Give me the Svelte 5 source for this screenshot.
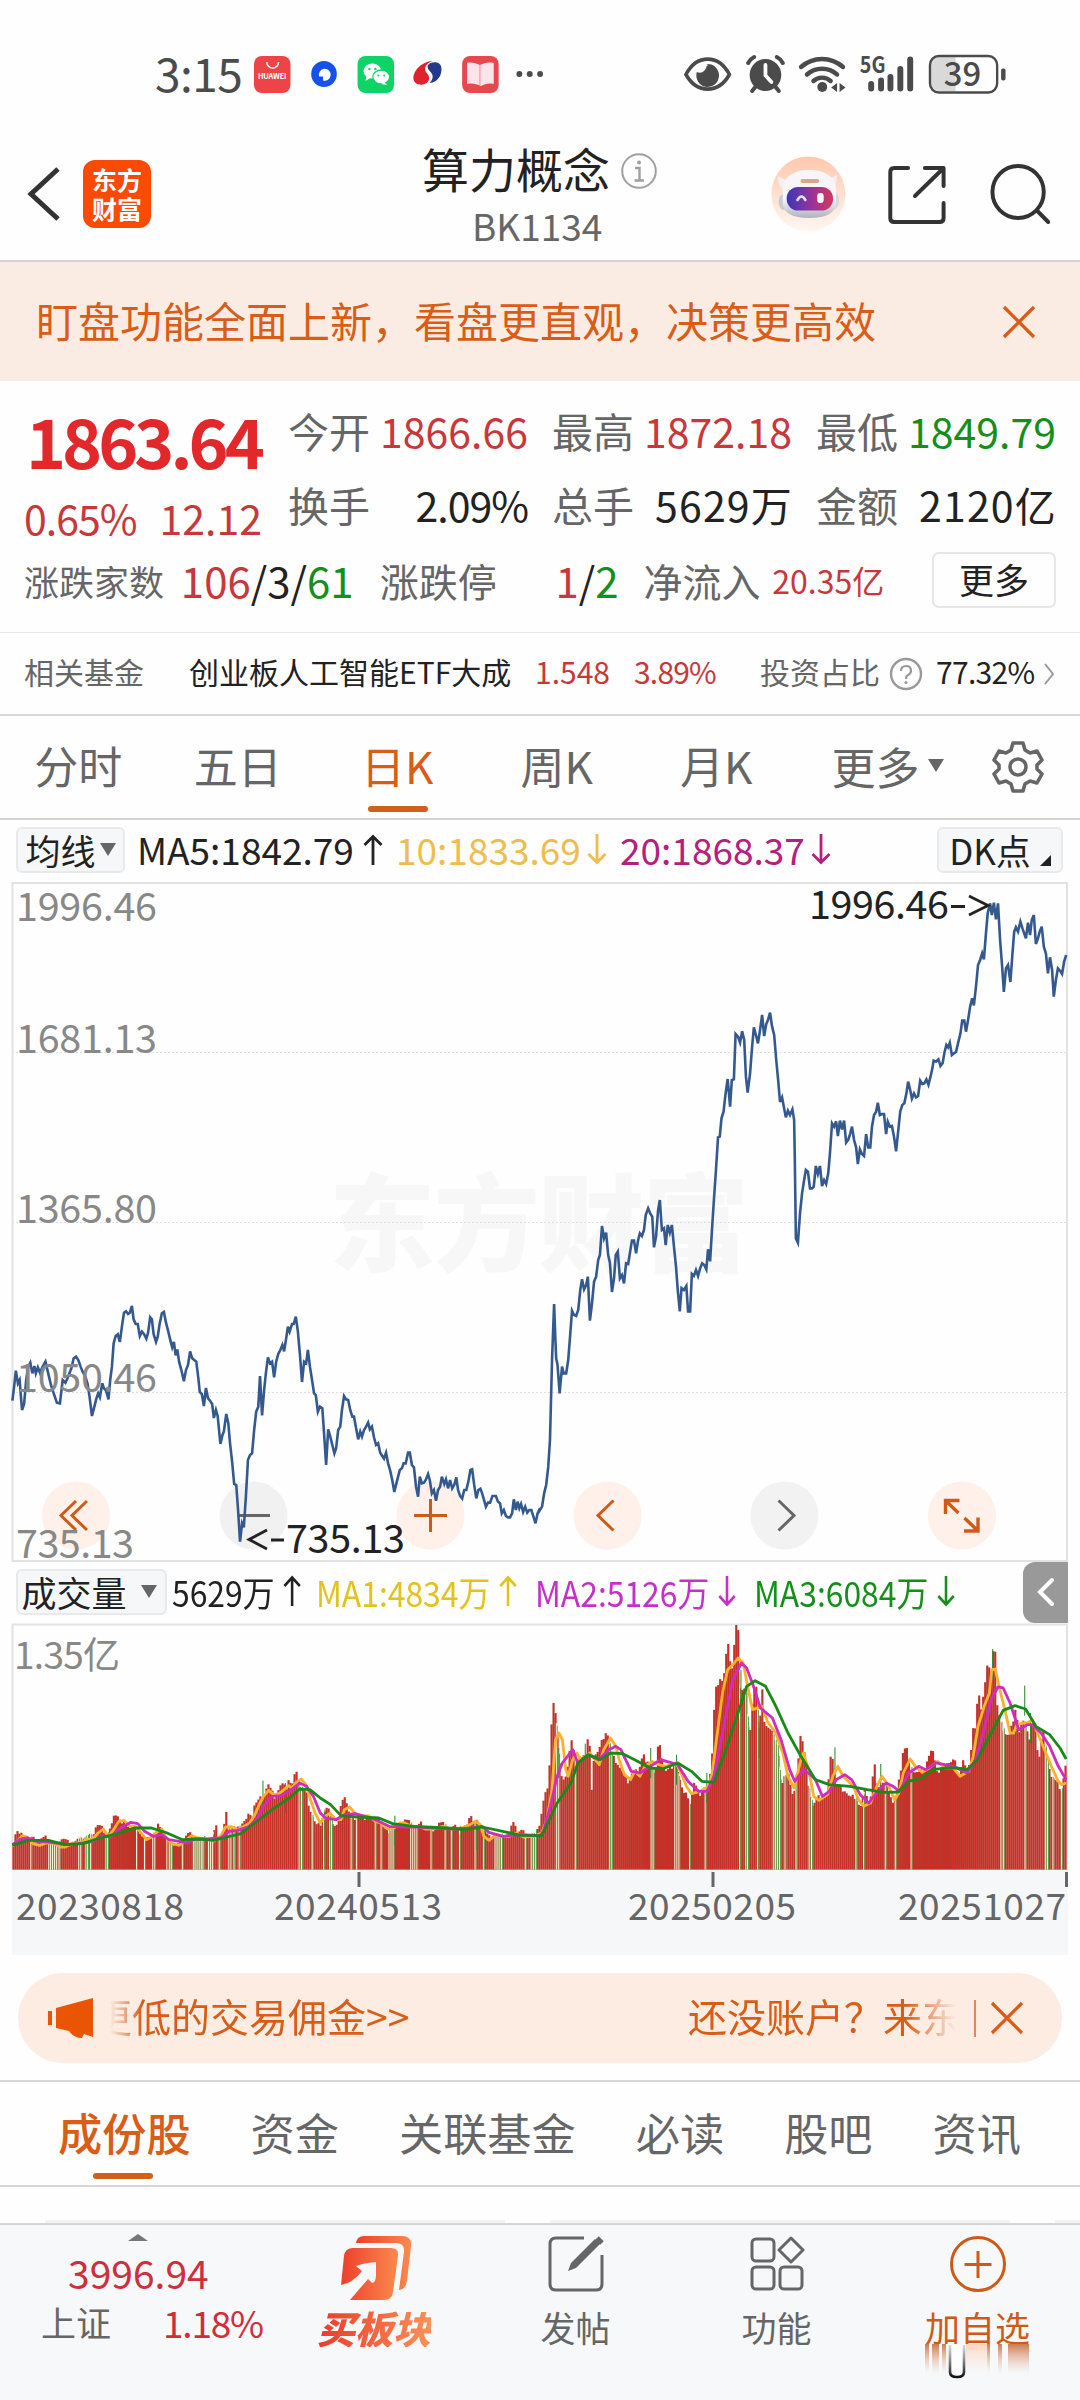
<script>
  const quotes = [
    { label: '今开', value: '1866.66', tone: 'red' },
    { label: '最高', value: '1872.18', tone: 'red' },
    { label: '最低', value: '1849.79', tone: 'green' },
    { label: '换手', value: '2.09%', tone: 'tight' },
    { label: '总手', value: '5629万', tone: 'wide' },
    { label: '金额', value: '2120亿', tone: 'wide' },
  ]
  const periods = ['分时', '五日', '日K', '周K', '月K']
  const sections = ['成份股', '资金', '关联基金', '必读', '股吧', '资讯']
  let period = $state('日K')
  let section = $state('成份股')

  const axis = [
    { text: '1996.46', y: 921 },
    { text: '1681.13', y: 1053 },
    { text: '1365.80', y: 1223 },
    { text: '1050.46', y: 1392 },
    { text: '735.13', y: 1558 },
  ]
  const dates = [
    { text: '20230818', x: 16 },
    { text: '20240513', x: 274 },
    { text: '20250205', x: 628 },
    { text: '20251027', x: 898 },
  ]

  // x runs 0..3098 over the plot, y is in thirds of a pixel from the top edge
  const parse = (s, dx, dy) =>
    s.trim().split(/\s+/).map((p) => {
      const [x, y] = p.split(',').map(Number)
      return [x + dx, y + dy]
    })
  const line = (pts) => pts.map((p) => p.join(',')).join(' ')

  const price = line([
    ...parse(`36,662 41,620 46,572 52,610 57,600 60,640 64,690 70,672 76,600 82,560 88,548 94,580 100,558 104,580 110,562 116,578 124,560 132,545 140,580 148,615 156,640 165,668 174,670 182,600 190,608 200,585 208,562 214,535 221,530 228,542 234,560 240,575 248,590 254,610 260,650 267,708 274,680 280,655 285,640 290,652 297,610 302,625 308,632 315,658 320,600 325,560 330,490 336,468 342,463 348,486 354,440 360,398 366,394 372,402 377,398 383,378 388,418 394,432 400,432 406,468 412,455 418,462 425,476 430,458 436,412 441,418 446,462 453,486 458,470 463,435 470,400 476,396 482,428 488,452 494,478 500,502 505,486 510,526 515,508 520,545 527,572 534,604 540,570 546,555 552,514 558,535 564,540 570,545 576,595 580,636 586,642 592,678 598,624 604,655 610,662 616,672 621,714 627,690 632,708 640,792 646,765 650,755 657,702 663,730 668,790 674,845 680,912 686,915 691,985 697,1085 703,1030 708,1042 714,950 720,840 726,825 732,820 738,750 744,695 750,680 755,588 761,706 767,630 772,580 778,532 784,550 790,545 796,592 802,545 808,522 814,510 820,495 825,514 831,475 836,440 841,455 848,432 853,432 859,410 865,455 871,525 877,606 883,545 889,550 894,510 900,560 906,600 912,640 917,645 923,695 929,680 936,685 941,760 947,855 953,748 959,770 965,795 971,820 976,805 982,750 988,740 993,690 999,648 1005,658 1011,660 1017,690 1023,710 1028,710 1034,745 1040,778 1046,755 1051,770 1057,750 1063,740 1069,728 1074,748 1080,740 1086,772 1092,795 1098,790 1104,818 1110,828 1115,836 1121,818 1127,850 1133,872 1139,900 1145,936 1151,910 1156,890 1161,870 1167,865 1172,850 1178,850 1185,818 1190,818 1196,855 1202,862 1208,920 1214,950 1219,890 1225,910 1231,908 1237,898 1243,882 1248,900 1254,940 1260,930 1266,962 1272,930 1278,920 1283,890 1290,912 1295,898 1301,925 1307,900 1313,925 1319,915 1325,892 1330,930 1336,948 1342,956 1348,930 1354,930 1360,905 1366,870 1371,868 1377,915 1383,955 1389,930 1395,926 1400,940 1406,962 1411,980 1417,968 1423,968 1430,948 1440,948 1446,965 1452,970 1457,1000 1463,990 1469,1008 1475,1012 1481,1012 1487,1000 1492,958 1498,990 1503,965 1508,985 1513,972 1519,996 1525,980 1531,998 1537,990 1543,990 1549,1010 1555,1030 1561,1000 1568,985`, 0, 891),
    ...parse(`0,930 6,920 12,880 18,855 24,800 29,720 32,600 35,480 41,312 44,400 47,475 51,495 57,580 64,500 69,520 76,520 82,480 88,400 93,332 99,345 105,348 111,330 117,270 122,238 128,268 134,255 139,230 145,362 151,310 157,245 163,230 169,180 174,165 180,78 186,115 192,98 198,165 203,188 209,276 215,235 220,165 226,155 232,235 238,225 244,250 250,190 256,192 261,160 267,122 273,122 279,160 285,120 290,100 296,108 302,90 307,45 314,25 320,40 326,50 331,142 337,110 343,30 348,0 354,90 360,85 365,135 371,75 377,98 383,75 389,140 395,200 400,270 406,334 411,264 418,270 425,258 430,334 436,334 441,222 447,228 453,210 459,228 465,205 471,190 477,195 483,208 488,148 494,184 500,80`, 1568, 951),
    ...parse(`505,1020 511,930 517,832 522,830 527,775 533,755 539,700 545,657 552,740 557,660 563,658 568,522 575,530 581,548 587,514 593,540 598,650 603,698 610,640 616,560 621,502 627,525 633,550 639,510 645,465 651,528 657,492 662,480 668,458 674,500 680,525 686,600 692,665 697,726 703,712 708,740 714,772 720,752 726,765 733,748 738,780 740,900 743,1135 749,1148 755,1060 761,1000 767,960 772,930 778,935 784,985 790,985 795,980 801,918 807,942 813,918 819,978 825,960 831,972 837,940 842,880 848,790 854,800 860,784 865,828 871,782 877,808 883,782 889,848 895,840 901,820 906,800 912,840 918,862 923,912 929,868 935,882 941,888 947,822 953,862 959,862 964,800 970,765 976,755 981,728 987,765 993,762 999,762 1005,822 1010,785 1016,800 1022,798 1028,830 1034,874 1040,815 1046,755 1052,735 1058,730 1064,700 1069,665 1075,690 1080,716 1086,700 1092,712 1098,708 1104,662 1110,672 1116,670 1122,658 1128,674 1134,650 1140,622 1143,602 1150,605 1157,598 1163,618 1169,610 1175,575 1180,555 1185,562 1190,548 1196,585 1202,580 1208,576 1215,545 1221,520 1226,482 1232,482 1237,515 1243,480 1249,440 1255,415 1260,436 1266,380 1272,315 1278,300 1284,280 1289,298 1295,220 1300,160 1307,130 1312,165 1318,128 1324,178 1330,130 1336,240 1342,320 1347,396 1353,325 1359,315 1366,366 1372,280 1377,215 1382,202 1388,215 1395,185 1401,205 1411,235 1417,188 1423,225 1428,180 1434,165 1440,252 1446,235 1451,215 1457,200 1463,260 1469,280 1475,340 1481,292 1487,330 1492,410 1498,360 1504,325 1510,332 1516,342 1522,305 1528,285`, 1568, -69),
  ])

  const tops = [
    ...parse(`36,765 43,760 46,710 54,735 62,735 75,740 90,745 105,752 120,748 135,745 150,762 165,770 180,745 190,752 205,765 220,755 240,745 255,740 270,735 280,705 292,712 300,720 310,738 325,705 335,670 345,680 352,705 365,700 380,715 400,715 415,745 430,750 440,735 452,730 462,697 470,720 480,740 495,760 510,765 525,760 540,735 550,727 560,745 580,750 600,745 612,755 627,712 635,745 645,740 657,672 665,715 675,710 690,720 705,695 715,690 722,675 730,690 738,645 748,635 757,625 768,610 778,582 788,605 800,625 812,590 822,585 830,600 838,567 848,590 855,560 861,538 868,585 880,600 890,615 898,650 910,690 920,710 930,705 940,670 952,652 960,690 975,712 985,690 993,625 1003,617 1010,660 1020,690 1040,680 1055,685 1070,675 1085,690 1100,680 1115,720 1130,725 1145,710 1160,705 1175,690 1190,700 1205,715 1225,702 1240,710 1260,718 1275,700 1290,705 1310,715 1330,712 1350,715 1366,670 1375,700 1390,700 1405,720 1420,745 1440,740 1460,735 1480,735 1493,680 1500,730 1515,725 1535,745 1550,735 1562,710`, 0, -103),
    ...parse(`0,705 8,645 17,610 25,575 34,390 41,325 47,400 53,475 60,550 68,570 78,560 85,480 93,440 100,500 108,525 118,500 125,490 133,500 140,435 147,500 150,610 155,510 162,490 170,485 178,460 185,440 193,420 200,450 210,500 225,520 240,550 255,575 270,545 285,545 300,488 308,525 320,520 335,560 344,457 352,490 362,545 375,540 390,520 400,545 412,600 425,605 437,655 445,590 455,580 465,620 475,600 485,600 493,560 500,490 508,310 515,285 524,262 532,280 540,200 547,168 553,215 560,240 567,106 574,106 578,145 580,300 588,295 598,295 605,420 612,430 618,300 628,290 636,440 645,300 652,400 660,410 675,430 690,470 700,595 712,560 720,540 728,590 736,630 745,560 757,428 765,470 772,520 782,600 792,650 805,625 820,620 835,610 843,510 851,500 858,580 870,595 885,600 900,625 915,620 930,655 945,600 958,645 965,570 972,530 980,590 995,580 1010,590 1025,640 1038,600 1045,560 1055,475 1066,478 1073,530 1085,545 1100,550 1115,540 1125,510 1135,488 1145,495 1155,555 1170,530 1180,515 1192,520 1203,510 1215,560 1228,512 1240,550 1250,500 1257,415 1265,420 1273,287 1280,360 1290,300 1302,203 1308,300 1315,180 1322,185 1328,360 1338,400 1350,430 1362,440 1372,400 1382,345 1390,435 1400,400 1412,400 1420,455 1428,395 1438,410 1448,515 1460,415 1470,490 1485,560 1500,580 1515,600 1525,530 1534,530`, 1568, -103),
  ]

  function topAt(x) {
    let i = 1
    while (i < tops.length - 1 && tops[i][0] < x) i++
    const [x0, y0] = tops[i - 1]
    const [x1, y1] = tops[i]
    const t = Math.min(1, Math.max(0, (x - x0) / (x1 - x0)))
    return y0 + (y1 - y0) * t
  }

  const STEP = 5.83
  const bars = Array.from({ length: 525 }, (_, i) => {
    const x = 36 + i * STEP
    const noise = ((i * 7919 + 31) % 17) - 8
    const down = (i * i * 13 + i * 7) % 11 > 5
    const top = Math.max(3, topAt(x + STEP / 2) + (topAt(x) > 40 ? noise : 0))
    return { x, top, down }
  })

  // days with a thin green candle, seen as light gaps in the volume area
  const gaps = [
    ...[90, 142, 147, 153, 159, 165, 172, 229, 235, 250, 255, 263, 308, 313, 397, 420, 444, 450, 485, 492, 498, 530, 562, 567, 573, 579, 585, 590, 606, 612, 618, 637, 665, 671, 680, 695, 869, 876, 907, 940, 958, 963, 1020, 1036, 1090, 1107, 1130, 1136, 1142, 1193, 1199, 1205, 1211, 1252, 1293, 1311, 1335, 1380, 1405, 1438, 1444, 1450, 1457, 1526, 1543, 1550, 1556],
    ...[48, 55, 103, 203, 209, 323, 329, 392, 398, 404, 435, 480, 580, 598, 603, 632, 678, 684, 690, 696, 712, 744, 782, 789, 918, 940, 1003, 1032, 1078, 1339, 1346, 1409, 1468, 1474, 1490, 1515].map((x) => x + 1568),
  ]
  const spikes = [[762, 573], [827, 580], [942, 660], [1145, 678], [1383, 690], [1621, 475], [1698, 462], [1888, 475], [1963, 495], [2051, 550], [2150, 240], [2203, 415], [2423, 473], [2556, 523], [2881, 178], [2974, 288], [2991, 370]]

  const averages = [
    {
      color: '#f9b22c',
      points: line([
        ...parse(`36,770 50,755 65,738 80,742 95,762 115,767 135,760 155,760 175,772 190,772 210,760 230,760 250,750 270,748 285,730 300,718 315,740 330,720 345,695 360,692 375,708 395,712 410,730 425,750 440,742 455,728 470,718 480,740 495,760 520,767 540,752 555,738 575,745 600,748 620,755 640,740 655,712 675,712 690,722 705,712 725,700 740,675 755,640 765,620 780,602 795,615 810,612 825,600 838,588 848,595 860,578 875,568 888,585 900,625 915,670 930,700 945,680 958,670 975,690 990,690 1000,660 1015,652 1030,670 1050,680 1070,678 1090,695 1105,700 1125,718 1145,715 1160,700 1175,700 1195,710 1215,710 1235,718 1260,718 1285,710 1310,718 1340,715 1365,705 1380,695 1395,705 1405,740 1420,752 1440,735 1460,740 1480,740 1500,730 1520,742 1550,740`, 0, -103),
        ...parse(`5,730 20,690 35,600 45,450 55,430 65,450 75,540 82,560 95,510 107,490 118,510 130,500 145,490 160,510 172,525 185,480 205,445 220,470 230,510 245,555 263,570 275,545 290,560 305,530 325,515 345,525 365,530 395,520 410,550 425,590 440,612 465,605 490,590 500,550 515,430 530,310 545,240 560,225 575,205 590,220 605,300 617,360 645,350 660,395 685,430 705,490 720,560 738,595 755,520 765,490 780,540 795,620 810,632 835,615 850,560 865,530 880,560 895,575 910,590 925,630 940,650 960,640 978,590 993,560 1010,585 1030,630 1042,610 1055,550 1075,508 1090,530 1110,548 1130,535 1155,515 1175,535 1200,535 1220,560 1245,545 1258,500 1272,410 1290,350 1305,310 1312,240 1322,238 1335,300 1350,360 1365,430 1375,430 1385,405 1400,400 1415,400 1430,390 1445,430 1465,480 1485,530 1505,575 1515,585 1528,580`, 1568, -103),
      ]),
    },
    {
      color: '#d02cc0',
      points: line([
        ...parse(`36,765 60,748 80,745 110,755 150,758 190,765 230,762 270,755 300,738 320,742 350,715 380,698 400,702 420,725 445,740 470,735 490,750 520,755 545,760 565,748 600,748 640,745 665,725 690,722 720,712 745,690 765,650 790,620 815,618 840,605 870,580 890,590 910,620 930,670 945,685 975,690 1000,675 1030,672 1060,680 1090,690 1130,710 1170,712 1210,712 1260,715 1320,718 1370,715 1400,710 1420,728 1460,740 1510,735`, 0, -103),
        ...parse(`0,738 10,725 30,650 50,560 65,520 95,480 110,520 140,495 170,510 200,480 220,470 235,480 265,545 290,550 320,530 350,510 400,525 430,575 460,605 485,605 505,560 530,430 560,270 585,220 600,235 620,290 640,355 675,385 700,450 725,540 740,575 765,540 785,555 800,570 820,620 840,605 860,570 885,555 905,570 930,615 955,640 980,605 1005,580 1025,590 1045,605 1070,550 1100,530 1120,540 1150,520 1200,530 1240,550 1265,510 1290,420 1310,330 1330,292 1345,295 1365,340 1390,420 1415,405 1430,405 1455,430 1480,470 1505,530 1528,570`, 1568, -103),
      ]),
    },
    {
      color: '#178a17',
      points: line([
        ...parse(`36,767 80,752 140,752 190,765 240,762 290,745 340,732 390,715 440,715 480,728 530,750 580,748 620,752 660,742 700,732 740,700 790,660 840,625 870,598 900,600 930,625 960,645 990,678 1040,682 1100,685 1140,702 1200,710 1300,715 1350,720 1400,712 1460,725 1510,737`, 0, -103),
        ...parse(`5,738 50,640 90,580 110,520 140,495 175,510 205,490 240,492 275,510 320,535 355,538 400,520 440,545 470,575 505,578 540,480 575,370 600,290 625,273 655,290 685,350 720,430 755,495 800,570 840,585 900,590 950,600 1000,608 1040,607 1070,575 1110,565 1140,540 1180,535 1210,535 1240,540 1270,510 1310,430 1345,362 1380,348 1410,358 1440,410 1480,435 1510,475 1528,508`, 1568, -103),
      ]),
    },
  ]
</script>

{#snippet arrow(up)}
  <svg class="arrow" width="20" height="32" viewBox="0 0 20 32">
    {#if up}
      <path d="M10 31V3M1.500 11L10 2.500L18.500 11" />
    {:else}
      <path d="M10 1V29M1.500 21L10 29.500L18.500 21" />
    {/if}
  </svg>
{/snippet}

<div class="screen">
  <div class="status">
    <span class="status__time">3:15</span>
    <svg class="status__apps" width="296" height="40" viewBox="252 54 300 40" preserveAspectRatio="none">
      <rect x="255" y="56" width="37" height="37" rx="8" fill="#ee4347" />
      <path d="M268 62a6 6 0 0 0 12 0" fill="none" stroke="#fff" stroke-width="1.500" />
      <text x="259" y="79.500" textLength="29" font-size="7.500" font-weight="700" fill="#fff">HUAWEI</text>
      <circle cx="326" cy="74" r="13" fill="#1551ea" />
      <path d="M325 80.500v-4h-4a6 6 0 1 1 4 4z" fill="#fff" />
      <rect x="360" y="56" width="37" height="37" rx="8" fill="#0fd366" />
      <ellipse cx="375" cy="71" rx="9" ry="7.500" fill="#fff" />
      <path d="M369 76l-1 5 5-3z" fill="#fff" />
      <ellipse cx="384" cy="77" rx="8.500" ry="7" fill="#fff" stroke="#0fd366" stroke-width="1.300" />
      <path d="M387 82l3 3-6-1z" fill="#fff" />
      <g fill="#0fd366"><circle cx="372" cy="69" r="1.200" /><circle cx="378" cy="69" r="1.200" /><circle cx="381" cy="75.500" r="1" /><circle cx="387" cy="75.500" r="1" /></g>
      <path d="M436 61c-13 1-21 12-19 19 1 5 9 6 13 3 4-3 3-7 0-10-3-4-2-9 6-12z" fill="#e0222d" />
      <path d="M434 63c10-3 13 4 10 12-2 5-7 8-11 8 4-4 4-8 1-11-4-4-4-7 0-9z" fill="#24398c" />
      <rect x="466" y="56" width="37" height="37" rx="8" fill="#e5484d" />
      <path d="M471 63c4-1 9 0 13 2 4-2 9-3 14-2v21c-5-1-9 0-13 2-4-2-9-3-14-2z" fill="#fde3ea" />
      <path d="M484 65v20" stroke="#f3a9b5" stroke-width="1.500" />
      <g fill="#4b4b4b"><circle cx="524" cy="74" r="3" /><circle cx="534.500" cy="74" r="3" /><circle cx="545" cy="74" r="3" /></g>
    </svg>
    <svg class="status__system" width="328" height="42" viewBox="681 52 332 42" preserveAspectRatio="none">
      <path d="M686 73.500C697 53 719 53 730 73.500C719 93 697 93 686 73.500z" fill="#fff" stroke="#4b4b4b" stroke-width="3.600" />
      <path d="M707 65c-1 5-5 8-10 6a11.500 11.500 0 1 0 10-8c2 1 1 2 0 2z" fill="#4b4b4b" />
      <circle cx="766.500" cy="74" r="16" fill="#4b4b4b" />
      <path d="M766.500 64v10.500l6 6.500" fill="none" stroke="#fff" stroke-width="3.800" stroke-linecap="round" stroke-linejoin="round" />
      <path d="M749 62q2-4 6-6M784 62q-2-4-6-6M757 85l-4 5M776 85l4 5" fill="none" stroke="#4b4b4b" stroke-width="4" stroke-linecap="round" />
      <g fill="none" stroke="#4b4b4b" stroke-width="4.400" stroke-linecap="round">
        <path d="M802.500 66a32 32 0 0 1 42.500 0" />
        <path d="M808.500 73.500a23 23 0 0 1 30.500 0" />
        <path d="M815 80a13 13 0 0 1 17.500 0" />
      </g>
      <circle cx="824" cy="86" r="5" fill="#4b4b4b" />
      <path d="M839 82v9l-6-4.500zM841.500 82v9l6-4.500z" fill="#4b4b4b" />
      <text x="862" y="72.500" textLength="26" lengthAdjust="spacingAndGlyphs" font-size="23" font-weight="700" fill="#4b4b4b">5G</text>
      <g stroke="#4b4b4b" stroke-width="6" stroke-linecap="round">
        <path d="M873.500 83v4.500M883.500 79.500v8M893 76v11.500M903 68v19.500M913 58.500v29" />
      </g>
      <path d="M942 56h17v34h-17q-8-1-8-9V64q0-7 8-8z" fill="#d9d9d9" />
      <rect x="933" y="55" width="68" height="36.500" rx="9" fill="none" stroke="#4b4b4b" stroke-width="2.400" />
      <text x="947" y="85" textLength="38" lengthAdjust="spacingAndGlyphs" font-size="33" font-weight="500" fill="#4b4b4b">39</text>
      <rect x="1005" y="67.500" width="4.500" height="12" rx="2" fill="#4b4b4b" />
    </svg>
  </div>

  <header class="header">
    <button class="header__back" aria-label="返回">
      <svg width="36" height="58" viewBox="0 0 36 58"><path d="M33 4L6 29L33 54" fill="none" stroke="#333" stroke-width="5" /></svg>
    </button>
    <div class="header__logo">东方<br />财富</div>
    <div class="header__center">
      <div class="header__title">
        <span>算力概念</span>
        <svg width="38" height="38" viewBox="0 0 38 38">
          <circle cx="19" cy="19" r="16.800" fill="none" stroke="#a0a0a0" stroke-width="2" />
          <circle cx="19" cy="10.500" r="2" fill="#a0a0a0" />
          <path d="M15 16h4.500v12M14.500 28.500h9.500" fill="none" stroke="#a0a0a0" stroke-width="2.400" />
        </svg>
      </div>
      <div class="header__code">BK1134</div>
    </div>
    <svg class="header__icons" width="306" height="80" viewBox="760 154 310 80" preserveAspectRatio="none">
      <defs>
        <linearGradient id="halo" x1="0" y1="0" x2="0" y2="1"><stop offset="0" stop-color="#ffc8ad" /><stop offset="1" stop-color="#fff7f2" /></linearGradient>
        <linearGradient id="visor" x1="0" y1="0" x2="1" y2="0"><stop offset="0" stop-color="#3b36b8" /><stop offset=".55" stop-color="#9b3399" /><stop offset="1" stop-color="#d23a5a" /></linearGradient>
        <linearGradient id="helmet" x1="0" y1="0" x2="0" y2="1"><stop offset=".6" stop-color="#f6f6fa" /><stop offset="1" stop-color="#b0b1c0" /></linearGradient>
      </defs>
      <circle cx="810" cy="194" r="37.500" fill="url(#halo)" />
      <path d="M779 176l8 4 4 8-6 3q-6-7-6-15zM839 175l-8 4-4 8 6 4q6-6 6-16z" fill="#efeff5" />
      <ellipse cx="785" cy="202" rx="5" ry="8" fill="#c8c9d2" /><ellipse cx="836" cy="201" rx="5" ry="8" fill="#d6d7e0" />
      <path d="M784 190c0-13 11-20 27-20s27 7 27 20v13c0 9-9 15-27 15s-27-6-27-15z" fill="url(#helmet)" />
      <rect x="802" y="179" width="19" height="4" rx="2" fill="#d9a78d" />
      <rect x="788" y="187" width="47" height="23.500" rx="11.500" fill="url(#visor)" />
      <path d="M799 200q4-7 8 0" fill="none" stroke="#dfe3ff" stroke-width="2.600" stroke-linecap="round" />
      <rect x="819" y="193" width="6.500" height="10" rx="3" fill="#fff" />
      <g fill="none" stroke="#333" stroke-width="4" stroke-linecap="round" stroke-linejoin="round">
        <path d="M911 168h-14q-4 0-4 4v46q0 4 4 4h46q4 0 4-4v-15" />
        <path d="M928 168h19v18M946 169l-28 27" />
        <circle cx="1022.500" cy="192" r="26" />
        <path d="M1042 211l11 11" />
      </g>
    </svg>
  </header>

  <div class="notice">
    <span>盯盘功能全面上新，看盘更直观，决策更高效</span>
    <svg width="34" height="34" viewBox="0 0 34 34"><path d="M2 2L32 32M32 2L2 32" stroke="#dd5a16" stroke-width="3.200" /></svg>
  </div>

  <section class="quote">
    <div class="quote__top">
      <div class="quote__main">
        <div class="quote__price">1863.64</div>
        <div class="quote__change"><span class="tight">0.65%</span><span>12.12</span></div>
      </div>
      <div class="quote__grid">
        {#each quotes as q}
          <div class="quote__cell"><span class="label">{q.label}</span><span class={q.tone}>{q.value}</span></div>
        {/each}
      </div>
    </div>
    <div class="quote__extra">
      <span class="label quote__count">涨跌家数</span>
      <span class="quote__ratio"><b>106</b>/3/<i>61</i></span>
      <span class="label quote__limit">涨跌停</span>
      <span class="quote__ratio quote__ratio--limit"><b>1</b>/<i>2</i></span>
      <span class="label quote__flow">净流入</span>
      <span class="red quote__amount">20.35亿</span>
      <button class="quote__more">更多</button>
    </div>
  </section>

  <div class="fund">
    <span class="label fund__title">相关基金</span>
    <span class="fund__name">创业板人工智能ETF大成</span>
    <span class="red fund__value">1.548</span>
    <span class="red fund__rate">3.89%</span>
    <span class="label">投资占比</span>
    <svg class="fund__help" width="34" height="34" viewBox="0 0 34 34">
      <circle cx="17" cy="17" r="15" fill="none" stroke="#999" stroke-width="2.400" />
      <path d="M12 14q0-5 5-5t5 4.500q0 3-3 4.500-2 1-2 4" fill="none" stroke="#999" stroke-width="2.200" /><circle cx="17" cy="25.500" r="1.600" fill="#999" />
    </svg>
    <span class="fund__share">77.32%</span>
    <svg width="12" height="24" viewBox="0 0 12 24"><path d="M2 2L10 12L2 22" fill="none" stroke="#999" stroke-width="2" /></svg>
  </div>

  <nav class="periods">
    {#each periods as p}
      <button class="periods__item" class:active={period === p} onclick={() => (period = p)}>{p}</button>
    {/each}
    <button class="periods__more">更多<i class="caret"></i></button>
    <svg class="periods__gear" width="54" height="54" viewBox="0 0 54 54" fill="none" stroke="#666" stroke-width="3.600" stroke-linejoin="round">
      <path d="M22 3h10l2 7 5 3 7-2 5 9-5 5v4l5 5-5 9-7-2-5 3-2 7H22l-2-7-5-3-7 2-5-9 5-5v-4l-5-5 5-9 7 2 5-3z" />
      <circle cx="27" cy="27" r="8" />
    </svg>
  </nav>

  <div class="legend">
    <button class="chip">均线<i class="caret"></i></button>
    <span class="legend__ma5">MA5:1842.79</span>{@render arrow(true)}
    <span class="legend__ma10 legend__value">10:1833.69</span><span class="legend__ma10">{@render arrow(false)}</span>
    <span class="legend__ma20 legend__value">20:1868.37</span><span class="legend__ma20">{@render arrow(false)}</span>
    <button class="chip chip--dk">DK点<i></i></button>
  </div>

  <svg class="chart" width="1080" height="682" viewBox="0 880 1080 682">
    <text x="329" y="1263" textLength="420" font-size="106" font-weight="800" fill="#f7f7f8">东方财富</text>
    <g stroke="#e0e0e0" stroke-dasharray="2 2">
      <path d="M12 1052.500H1067M12 1222.500H1067M12 1392.500H1067" />
    </g>
    <rect x="12.500" y="883" width="1054.500" height="678" fill="none" stroke="#e2e2e4" stroke-width="2" />
    <g>
      <circle cx="76" cy="1515.500" r="34" fill="#fff0e9" /><circle cx="253.500" cy="1515.500" r="34" fill="#f1f1f2" />
      <circle cx="430.500" cy="1515.500" r="34" fill="#fff0e9" /><circle cx="607.500" cy="1515.500" r="34" fill="#fff0e9" />
      <circle cx="784.500" cy="1515.500" r="34" fill="#f2f2f2" /><circle cx="962" cy="1515.500" r="34" fill="#fff0e9" />
    </g>
    <g fill="none" stroke="#cf5a18" stroke-width="3">
      <path d="M76 1501L61 1515.500L76 1530M87 1501L72 1515.500L87 1530" />
      <path d="M414 1515.500h33M430.500 1499v33" />
      <path d="M613.500 1500.500L598 1515.500L613.500 1530.500" />
      <path d="M945.500 1514v-13.500h14M946 1501l12.500 12M978 1517.500v13.500h-14M977 1530l-12.500-12" stroke-width="3.400" />
    </g>
    <g fill="none" stroke="#666" stroke-width="3"><path d="M239 1515.500h31M778.500 1500.500L794 1515.500L778.500 1530.500" /></g>
    <g transform="translate(0 883) scale(.34438 .33333)">
      <polyline points={price} fill="none" stroke="#33598f" stroke-width="2.600" stroke-linejoin="miter" vector-effect="non-scaling-stroke" />
    </g>
    <g font-size="39.500" fill="#888">
      {#each axis as a}
        <text x="16" y={a.y} textLength={a.text.length > 6 ? 141 : 118}>{a.text}</text>
      {/each}
    </g>
    <g font-size="39.500" fill="#222">
      <text x="809" y="919" textLength="140">1996.46</text>
      <text x="286" y="1553" textLength="119">735.13</text>
      <path d="M951 906.500h14M969 896l19 9.500l-19 9.500M284 1540h-13M267 1530l-18 9.500l18 9.500" fill="none" stroke="#222" stroke-width="2.800" />
    </g>
  </svg>

  <div class="legend legend--volume">
    <button class="chip chip--volume">成交量<i class="caret"></i></button>
    <span class="legend__now">5629万{@render arrow(true)}</span>
    <span class="legend__v1">MA1:4834万{@render arrow(true)}</span>
    <span class="legend__v2">MA2:5126万{@render arrow(false)}</span>
    <span class="legend__v3">MA3:6084万{@render arrow(false)}</span>
    <button class="legend__drawer" aria-label="展开">
      <svg width="20" height="30" viewBox="0 0 20 30"><path d="M16 3L4 15L16 27" fill="none" stroke="#fff" stroke-width="4" stroke-linecap="round" /></svg>
    </button>
  </div>

  <svg class="chart" width="1080" height="334" viewBox="0 1622 1080 334">
    <rect x="12" y="1871" width="1056" height="84" fill="#f6f7f9" />
    <path d="M12.500 1870V1624.500H1067V1870" fill="none" stroke="#e2e2e4" stroke-width="2" />
    <text x="14" y="1669" textLength="106" font-size="37" fill="#888">1.35亿</text>
    <g transform="translate(0 1624) scale(.34438 .33333)">
      {#each bars as b}
        <rect x={b.x} y={b.top} width={STEP + 0.4} height={737 - b.top} fill={b.down ? '#b13b28' : '#d02b29'} />
      {/each}
      {#each gaps as x}
        <rect x={x - 2} y={topAt(x) - 12} width="5" height={749 - topAt(x)} fill="#f6f7dc" />
        <rect x={x + 1} y={topAt(x) - 4} width="2" height={741 - topAt(x)} fill="#178a17" />
      {/each}
      {#each spikes as [x, y]}
        <rect {x} y={y - 103} width="3" height="90" fill="#2f8a2f" />
      {/each}
      {#each averages as a}
        <polyline points={a.points} fill="none" stroke={a.color} stroke-width="2.800" stroke-linejoin="round" vector-effect="non-scaling-stroke" />
      {/each}
    </g>
    <path d="M359 1872v15M713 1872v15M1066.500 1872v15" stroke="#666" stroke-width="3" />
    <g font-size="37" fill="#666">
      {#each dates as d}
        <text x={d.x} y="1920" textLength="168">{d.text}</text>
      {/each}
    </g>
  </svg>

  <div class="promo">
    <svg width="48" height="42" viewBox="0 0 48 42" fill="#ea5504"><path d="M1 14h4v14H1zM9 11L46 1v39l-9-3-2 4q-8 0-13-7L9 31z" /></svg>
    <div class="promo__text"><span>更低的交易佣金&gt;&gt;</span><span>还没账户？来东</span></div>
    <i class="promo__sep"></i>
    <svg width="34" height="34" viewBox="0 0 34 34"><path d="M2 2L32 32M32 2L2 32" stroke="#dd5a16" stroke-width="3.200" /></svg>
  </div>

  <nav class="sections">
    {#each sections as s}
      <button class="sections__item" class:active={section === s} onclick={() => (section = s)}>{s}</button>
    {/each}
  </nav>

  <div class="cards"><i></i><i></i><i></i></div>

  <footer class="bottom">
    <div class="bottom__index">
      <i class="bottom__up"></i>
      <div class="bottom__point">3996.94</div>
      <div class="bottom__row"><span>上证</span><b>1.18%</b></div>
    </div>
    <div class="bottom__item bottom__item--buy">
      <svg width="74" height="68" viewBox="0 0 74 68">
        <defs>
          <linearGradient id="buy1" x1="0" y1="0" x2="1" y2="0"><stop offset="0" stop-color="#ed3f2b" /><stop offset="1" stop-color="#fb8a4e" /></linearGradient>
        </defs>
        <path d="M16 9q1-7 8-7h38q10 0 9 10l-4 35q-1 8-8 9l5-38q1-9-8-9z" fill="url(#buy1)" />
        <path d="M4 22q1-8 9-8h38q8 0 7 8l-5 36q-1 8-9 8H10l18-21 4 4q4-1 4-8V28q-13 1-20 4l6 5Q13 49 1 51z" fill="url(#buy1)" />
      </svg>
      <span>买板块</span>
    </div>
    <div class="bottom__item">
      <svg width="58" height="58" viewBox="0 0 58 58" fill="none" stroke="#666" stroke-width="3">
        <path d="M37 3H9Q3 3 3 9v40q0 6 6 6h40q6 0 6-6V20" />
        <path d="M21 36l3-8L48 4l5 5-24 24z" fill="#666" stroke="none" /><path d="M50 3l5 5" stroke-width="5" />
      </svg>
      <span>发帖</span>
    </div>
    <div class="bottom__item">
      <svg width="56" height="56" viewBox="0 0 56 56" fill="none" stroke="#666" stroke-width="3">
        <rect x="3" y="3" width="22" height="22" rx="4" /><rect x="3" y="31" width="22" height="22" rx="4" /><rect x="31" y="31" width="22" height="22" rx="4" />
        <path d="M42 2l12 12-12 12-12-12z" stroke-linejoin="round" />
      </svg>
      <span>功能</span>
    </div>
    <div class="bottom__item bottom__item--add">
      <svg width="58" height="58" viewBox="0 0 58 58" fill="none" stroke="#cf5a18" stroke-width="3"><circle cx="29" cy="29" r="26.500" /><path d="M15.500 29.500h27M29 16v27" /></svg>
      <span>加自选</span>
      <svg class="bottom__trail" width="110" height="36" viewBox="0 0 110 36">
        <defs>
          <linearGradient id="fade" x1="0" y1="0" x2="0" y2="1"><stop offset="0" stop-color="#c25a28" stop-opacity=".8" /><stop offset="1" stop-color="#e9b79c" stop-opacity="0" /></linearGradient>
          <linearGradient id="pale" x1="0" y1="0" x2="0" y2="1"><stop offset="0" stop-color="#ffc5a6" stop-opacity=".7" /><stop offset="1" stop-color="#ffe6da" stop-opacity="0" /></linearGradient>
          <linearGradient id="ink" x1="0" y1="0" x2="0" y2="1"><stop offset="0" stop-color="#555" stop-opacity=".2" /><stop offset="1" stop-color="#111" /></linearGradient>
        </defs>
        <rect width="110" height="36" fill="#f6f8fa" />
        <rect x="2" width="4" height="30" fill="url(#fade)" /><rect x="9" width="7" height="30" fill="url(#fade)" /><rect x="19" width="4" height="30" fill="url(#fade)" />
        <rect x="43" width="21" height="30" fill="url(#pale)" /><rect x="64" width="3" height="30" fill="url(#fade)" />
        <rect x="75" width="4" height="30" fill="url(#fade)" /><rect x="85" width="21" height="30" fill="url(#fade)" />
        <path d="M27 1V28q0 5 7 5t7-5V1" fill="#fdfdfd" stroke="url(#ink)" stroke-width="2.600" />
      </svg>
    </div>
  </footer>
</div>

<style>
  :global(body) {
    margin: 0;
    background: #fefefe;
  }

  .screen {
    width: 1080px;
    height: 2400px;
    overflow: hidden;
    background: #fefefe;
    color: #222;
    font-family: "Noto Sans CJK SC", "Noto Sans", sans-serif;
    font-size: 41px;
    line-height: 1;
    white-space: nowrap;
  }

  .screen svg {
    display: block;
    flex: none;
  }

  button {
    padding: 0;
    border: 0;
    background: none;
    color: inherit;
    font: inherit;
    cursor: pointer;
  }

  .label {
    color: #666;
  }

  .red {
    color: #c8383a;
  }

  .green {
    color: #14901a;
  }

  .tight {
    letter-spacing: -1px;
  }

  .wide {
    margin-right: -1px;
    letter-spacing: 1.2px;
  }

  .caret {
    display: inline-block;
    border: 8px solid transparent;
    border-top: 13px solid #666;
    border-bottom: 0;
  }

  .status {
    display: flex;
    align-items: center;
    height: 148px;
    box-sizing: border-box;
    padding: 0 71px 0 155px;
  }

  .status__time {
    width: 96px;
    padding-bottom: 5px;
    color: #4b4b4b;
    font-size: 46px;
    letter-spacing: -0.5px;
  }

  .status__system {
    margin-left: auto;
  }

  .header {
    display: flex;
    align-items: center;
    height: 112px;
    padding: 0 15px 0 25px;
    border-bottom: 2px solid #d5d5d7;
  }

  .header__back {
    width: 36px;
    margin-top: -20px;
  }

  .header__logo {
    display: flex;
    align-items: center;
    justify-content: center;
    width: 68px;
    height: 68px;
    margin: -20px 0 0 22px;
    border-radius: 12px;
    background: #fb4a05;
    color: #fff;
    font-size: 25px;
    font-weight: 700;
    line-height: 29px;
  }

  .header__center {
    flex: 1;
    margin: -21px 0 0 10px;
    padding-left: 261px;
  }

  .header__title {
    display: flex;
    align-items: center;
    gap: 10px;
    height: 54px;
    font-size: 47px;
  }

  .header__title span {
    padding-bottom: 6px;
  }

  .header__code {
    width: 130px;
    margin: 9px 0 0 50px;
    color: #666;
    font-size: 37px;
  }

  .header__icons {
    margin-top: -20px;
  }

  .notice {
    display: flex;
    align-items: center;
    justify-content: space-between;
    height: 119px;
    padding: 0 44px 0 36px;
    background: #fbece3;
    color: #d95c17;
    font-size: 42px;
  }

  .notice span {
    padding-bottom: 3px;
  }

  .quote {
    height: 252px;
    box-sizing: border-box;
    padding: 12px 24px 0;
    border-bottom: 1px solid #e8e8e8;
  }

  .quote__top {
    display: flex;
    height: 148px;
  }

  .quote__main {
    width: 239px;
    margin-right: 26px;
  }

  .quote__price {
    height: 94px;
    padding-left: 2px;
    color: #e2282b;
    font-size: 68px;
    font-weight: 700;
    line-height: 94px;
    letter-spacing: -4px;
  }

  .quote__change {
    display: flex;
    justify-content: space-between;
    color: #c8383a;
    line-height: 60px;
  }

  .quote__grid {
    display: grid;
    grid-template-columns: repeat(3, 240px);
    gap: 0 24px;
    height: 148px;
  }

  .quote__cell {
    display: flex;
    justify-content: space-between;
    align-items: center;
    height: 74px;
  }

  .quote__extra {
    display: flex;
    align-items: center;
    height: 78px;
  }

  .quote__count {
    width: 157px;
    font-size: 35px;
  }

  .quote__ratio {
    width: 199px;
    font-size: 42px;
  }

  .quote__ratio b {
    color: #c8383a;
    font-weight: 400;
  }

  .quote__ratio i {
    color: #14901a;
    font-style: normal;
  }

  .quote__limit {
    width: 176px;
    font-size: 39px;
  }

  .quote__ratio--limit {
    width: 88px;
  }

  .quote__flow {
    width: 129px;
    font-size: 39px;
  }

  .quote__amount {
    width: 160px;
    font-size: 32px;
  }

  .quote__more {
    width: 124px;
    height: 56px;
    padding-bottom: 4px;
    border: 2px solid #e6e6e8;
    border-radius: 7px;
    font-size: 35px;
  }

  .fund {
    display: flex;
    align-items: center;
    height: 81px;
    padding: 0 24px;
    border-bottom: 2px solid #d8d8da;
    font-size: 30px;
  }

  .fund span {
    padding-bottom: 5px;
  }

  .fund__title {
    width: 165px;
  }

  .fund__name {
    width: 346px;
  }

  .fund__value {
    width: 99px;
  }

  .fund__rate {
    width: 126px;
    letter-spacing: -0.8px;
  }

  .fund__help {
    margin: 0 13px 0 9px;
  }

  .fund__share {
    width: 107px;
    letter-spacing: -0.7px;
  }

  .periods {
    display: flex;
    align-items: center;
    height: 102px;
    border-bottom: 2px solid #d2d2d4;
    color: #666;
    font-size: 44px;
  }

  .periods__item {
    position: relative;
    width: 159.5px;
    height: 102px;
    padding: 0 3px 4px 0;
  }

  .active {
    color: #d95c17;
  }

  .active::after {
    content: "";
    position: absolute;
    left: 50%;
    bottom: 6px;
    width: 60px;
    height: 6px;
    margin-left: -31px;
    border-radius: 3px;
    background: #d0601a;
  }

  .periods__more {
    display: flex;
    align-items: center;
    gap: 8px;
    margin-left: 34px;
    padding-bottom: 3px;
  }

  .periods__gear {
    margin-left: 47px;
  }

  .legend {
    display: flex;
    align-items: center;
    height: 60px;
    padding: 0 17px 0 16px;
    font-size: 37px;
  }

  .legend > span {
    flex: none;
    padding-bottom: 2px;
  }

  .chip {
    display: flex;
    flex: none;
    align-items: center;
    justify-content: center;
    gap: 4px;
    width: 109px;
    height: 46px;
    box-sizing: border-box;
    padding-bottom: 2px;
    border: 2px solid #e8e9eb;
    border-radius: 6px;
    background: #f6f7f9;
    font-size: 35px;
  }

  .chip--dk {
    gap: 9px;
    width: 126px;
    margin-left: auto;
  }

  .chip--dk i {
    align-self: flex-end;
    margin-bottom: 3px;
    border-bottom: 11px solid #222;
    border-left: 11px solid transparent;
  }

  .arrow {
    fill: none;
    stroke: currentColor;
    stroke-width: 2.8;
  }

  .legend__ma5 {
    width: 226px;
    margin-left: 12px;
  }

  .legend__ma10 {
    color: #eebd4e;
  }

  .legend__ma20 {
    color: #b5207c;
  }

  .legend__value {
    width: 191px;
    margin-left: 13px;
  }

  .legend--volume {
    padding-right: 12px;
    font-size: 35px;
  }

  /* the volume row is set in condensed figures */
  .legend--volume > span {
    display: flex;
    align-items: center;
    gap: 9px;
    transform: scaleX(0.91);
    transform-origin: left;
  }

  .chip--volume {
    gap: 14px;
    width: 151px;
    padding-right: 5px;
  }

  .legend__now {
    width: 144px;
    margin-left: 5px;
  }

  .legend__v1 {
    width: 219px;
    color: #e3c21e;
  }

  .legend__v2 {
    width: 219px;
    color: #c430c8;
  }

  .legend__v3 {
    width: 219px;
    color: #14901a;
  }

  .legend__drawer {
    display: flex;
    align-items: center;
    justify-content: center;
    width: 45px;
    height: 61px;
    margin-left: auto;
    border-radius: 12px 0 0 12px;
    background: #999;
  }

  .promo {
    display: flex;
    align-items: center;
    height: 90px;
    margin: 17px 18px;
    padding: 0 38px 0 29px;
    border-radius: 45px;
    background: #fcece2;
    color: #d95c17;
    font-size: 39px;
  }

  .promo__text {
    display: flex;
    justify-content: space-between;
    flex: 1;
    height: 64px;
    margin: 0 18px 0 15px;
    overflow: hidden;
    line-height: 59px;
    -webkit-mask-image: linear-gradient(90deg, transparent, #000 32px, #000 calc(100% - 50px), transparent);
    mask-image: linear-gradient(90deg, transparent, #000 32px, #000 calc(100% - 50px), transparent);
  }

  .promo__text span:first-child {
    margin-left: -17px;
  }

  .promo__text span:last-child {
    margin-right: -5px;
  }

  .promo__sep {
    width: 2px;
    height: 37px;
    margin-right: 14px;
    background: #d98a60;
  }

  .sections {
    display: flex;
    align-items: center;
    gap: 60px;
    height: 103px;
    padding-left: 58px;
    border-top: 2px solid #d5d6d8;
    border-bottom: 2px solid #d5d6d8;
    color: #666;
    font-size: 44.2px;
  }

  .sections__item {
    position: relative;
    height: 103px;
    padding-bottom: 3px;
  }

  .sections__item.active {
    color: #d95c17;
    font-weight: 500;
  }

  .cards {
    display: flex;
    align-items: flex-end;
    gap: 45px;
    height: 36px;
    padding-left: 45px;
    border-bottom: 2px solid #d5d6d8;
  }

  .cards i {
    flex: none;
    width: 460px;
    height: 3px;
    background: #f3f3f4;
  }

  .bottom {
    display: flex;
    height: 176px;
    background: #f6f8fa;
    color: #666;
  }

  .bottom__index {
    width: 222px;
    padding: 9px 20px 0 41px;
  }

  .bottom__up {
    display: block;
    width: 0;
    margin-left: 87px;
    border: 10px solid transparent;
    border-top: 0;
    border-bottom: 7px solid #777;
  }

  .bottom__point {
    margin: 12px 0 0 27px;
    color: #cf2f3b;
    font-size: 39px;
  }

  .bottom__row {
    display: flex;
    justify-content: space-between;
    margin-top: 12px;
    font-size: 35px;
  }

  .bottom__row b {
    color: #cf2f3b;
    font-size: 37px;
    font-weight: 400;
    letter-spacing: -1.2px;
  }

  .bottom__item {
    display: flex;
    flex-direction: column;
    align-items: center;
    width: 201px;
    height: 160px;
    padding-top: 9px;
    font-size: 35px;
  }

  .bottom__item svg {
    height: 60px;
  }

  .bottom__item > span {
    margin-top: 15px;
  }

  .bottom__item--buy {
    width: 188px;
    margin-right: 4px;
  }

  .bottom__item--buy svg {
    height: 68px;
  }

  .bottom__item--buy > span {
    margin: 7px 6px 0 0;
    background: linear-gradient(90deg, #ea3a2a, #fb9158);
    -webkit-background-clip: text;
    background-clip: text;
    color: transparent;
    font-size: 38px;
    font-style: italic;
    font-weight: 900;
  }

  .bottom__item--add {
    position: relative;
    color: #cf5a18;
  }

  .bottom__item--add .bottom__trail {
    position: absolute;
    top: 119px;
    left: 46px;
    height: 36px;
  }
</style>
